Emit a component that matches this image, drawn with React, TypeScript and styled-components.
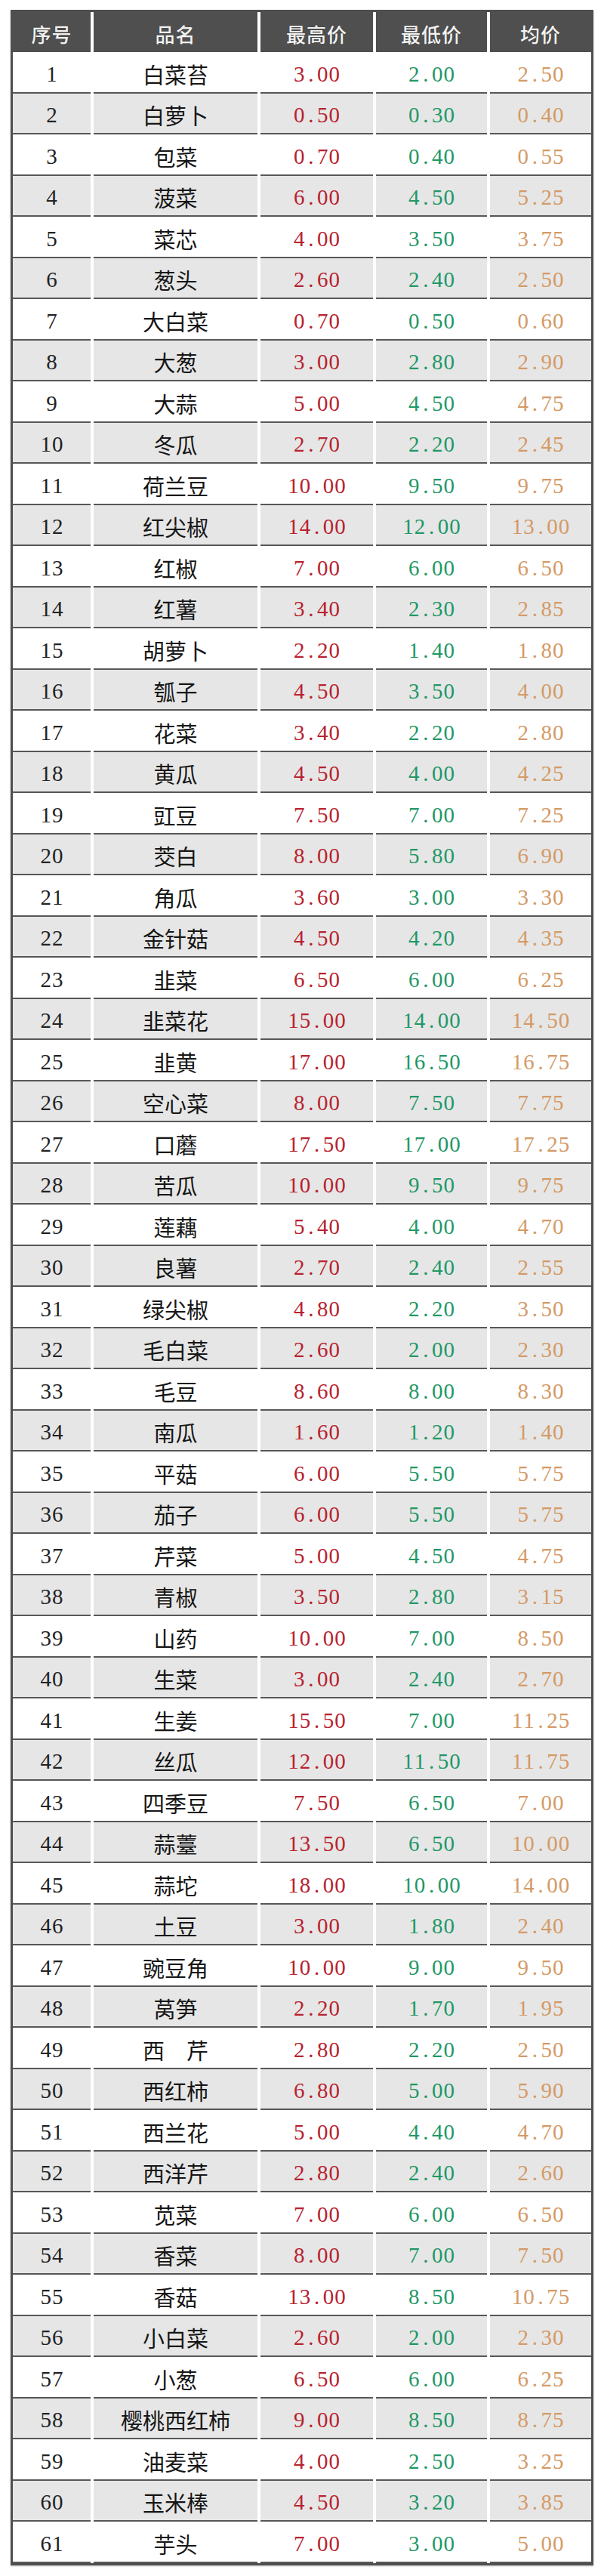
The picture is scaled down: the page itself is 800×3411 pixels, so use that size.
import React from "react";
import styled, { createGlobalStyle } from "styled-components";

const GlobalStyle = createGlobalStyle`
  html, body {
    margin: 0;
    padding: 0;
    background: #ffffff;
  }
  body {
    font-family: "Liberation Serif", "Noto Sans CJK SC", serif;
  }
`;

type Item = [string, string, string, string];

const DATA: Item[] = [
  ["白菜苔", "3.00", "2.00", "2.50"],
  ["白萝卜", "0.50", "0.30", "0.40"],
  ["包菜", "0.70", "0.40", "0.55"],
  ["菠菜", "6.00", "4.50", "5.25"],
  ["菜芯", "4.00", "3.50", "3.75"],
  ["葱头", "2.60", "2.40", "2.50"],
  ["大白菜", "0.70", "0.50", "0.60"],
  ["大葱", "3.00", "2.80", "2.90"],
  ["大蒜", "5.00", "4.50", "4.75"],
  ["冬瓜", "2.70", "2.20", "2.45"],
  ["荷兰豆", "10.00", "9.50", "9.75"],
  ["红尖椒", "14.00", "12.00", "13.00"],
  ["红椒", "7.00", "6.00", "6.50"],
  ["红薯", "3.40", "2.30", "2.85"],
  ["胡萝卜", "2.20", "1.40", "1.80"],
  ["瓠子", "4.50", "3.50", "4.00"],
  ["花菜", "3.40", "2.20", "2.80"],
  ["黄瓜", "4.50", "4.00", "4.25"],
  ["豇豆", "7.50", "7.00", "7.25"],
  ["茭白", "8.00", "5.80", "6.90"],
  ["角瓜", "3.60", "3.00", "3.30"],
  ["金针菇", "4.50", "4.20", "4.35"],
  ["韭菜", "6.50", "6.00", "6.25"],
  ["韭菜花", "15.00", "14.00", "14.50"],
  ["韭黄", "17.00", "16.50", "16.75"],
  ["空心菜", "8.00", "7.50", "7.75"],
  ["口蘑", "17.50", "17.00", "17.25"],
  ["苦瓜", "10.00", "9.50", "9.75"],
  ["莲藕", "5.40", "4.00", "4.70"],
  ["良薯", "2.70", "2.40", "2.55"],
  ["绿尖椒", "4.80", "2.20", "3.50"],
  ["毛白菜", "2.60", "2.00", "2.30"],
  ["毛豆", "8.60", "8.00", "8.30"],
  ["南瓜", "1.60", "1.20", "1.40"],
  ["平菇", "6.00", "5.50", "5.75"],
  ["茄子", "6.00", "5.50", "5.75"],
  ["芹菜", "5.00", "4.50", "4.75"],
  ["青椒", "3.50", "2.80", "3.15"],
  ["山药", "10.00", "7.00", "8.50"],
  ["生菜", "3.00", "2.40", "2.70"],
  ["生姜", "15.50", "7.00", "11.25"],
  ["丝瓜", "12.00", "11.50", "11.75"],
  ["四季豆", "7.50", "6.50", "7.00"],
  ["蒜薹", "13.50", "6.50", "10.00"],
  ["蒜坨", "18.00", "10.00", "14.00"],
  ["土豆", "3.00", "1.80", "2.40"],
  ["豌豆角", "10.00", "9.00", "9.50"],
  ["莴笋", "2.20", "1.70", "1.95"],
  ["西\u3000芹", "2.80", "2.20", "2.50"],
  ["西红柿", "6.80", "5.00", "5.90"],
  ["西兰花", "5.00", "4.40", "4.70"],
  ["西洋芹", "2.80", "2.40", "2.60"],
  ["苋菜", "7.00", "6.00", "6.50"],
  ["香菜", "8.00", "7.00", "7.50"],
  ["香菇", "13.00", "8.50", "10.75"],
  ["小白菜", "2.60", "2.00", "2.30"],
  ["小葱", "6.50", "6.00", "6.25"],
  ["樱桃西红柿", "9.00", "8.50", "8.75"],
  ["油麦菜", "4.00", "2.50", "3.25"],
  ["玉米棒", "4.50", "3.20", "3.85"],
  ["芋头", "7.00", "3.00", "5.00"],
];

const COLS = "103px 217px 149px 147px 1fr";

const Table = styled.div`
  margin: 13px 14px 15px 14px;
  border: 3px solid #4f4f4f;
  background: #ffffff;
  box-shadow: 0 1px 2px rgba(0, 0, 0, 0.25);
`;

const HeaderRow = styled.div`
  display: grid;
  grid-template-columns: ${COLS};
  column-gap: 4px;
  height: 53px;
  background: #ffffff;
`;

const HeaderCell = styled.div`
  display: flex;
  align-items: center;
  justify-content: center;
  padding-top: 3px;
  box-sizing: border-box;
  background: #4f4f4f;
  color: #f2f2f2;
  font-family: "Noto Sans CJK SC", sans-serif;
  font-weight: 500;
  font-size: 26px;
  letter-spacing: 1px;
  text-shadow: 0 0 1px rgba(0, 0, 0, 0.4);
`;

const Row = styled.div`
  display: grid;
  grid-template-columns: ${COLS};
  column-gap: 4px;
  height: 54.5px;
  background: #ffffff;
`;

const Cell = styled.div<{ $shade: boolean }>`
  display: flex;
  align-items: center;
  justify-content: center;
  padding-top: 6px;
  box-sizing: border-box;
  background: ${(p) => (p.$shade ? "#e6e6e6" : "#ffffff")};
  border-bottom: 2px solid #575757;
`;

const Name = styled.span`
  font-family: "Noto Sans CJK SC", sans-serif;
  font-size: 29px;
  font-weight: 400;
  color: #161616;
  line-height: 1;
`;

const Num = styled.span<{ $color: string }>`
  display: inline-flex;
  font-family: "Liberation Serif", "DejaVu Serif", serif;
  font-size: 29px;
  line-height: 1;
  color: ${(p) => p.$color};
`;

const Glyph = styled.span`
  display: inline-block;
  width: 15.5px;
  text-align: center;
`;

const MonoNumber: React.FC<{ value: string; color: string }> = ({ value, color }) => (
  <Num $color={color}>
    {value.split("").map((ch, i) => (
      <Glyph key={i}>{ch}</Glyph>
    ))}
  </Num>
);

const HEADERS = ["序号", "品名", "最高价", "最低价", "均价"];

export default function App() {
  return (
    <>
      <GlobalStyle />
      <Table>
        <HeaderRow>
          {HEADERS.map((h) => (
            <HeaderCell key={h}>{h}</HeaderCell>
          ))}
        </HeaderRow>
        {DATA.map(([name, hi, lo, avg], i) => {
          const shade = i % 2 === 1;
          return (
            <Row key={i}>
              <Cell $shade={shade}>
                <MonoNumber value={String(i + 1)} color="#222222" />
              </Cell>
              <Cell $shade={shade}>
                <Name>{name}</Name>
              </Cell>
              <Cell $shade={shade}>
                <MonoNumber value={hi} color="#b8222e" />
              </Cell>
              <Cell $shade={shade}>
                <MonoNumber value={lo} color="#1f9866" />
              </Cell>
              <Cell $shade={shade}>
                <MonoNumber value={avg} color="#d49a66" />
              </Cell>
            </Row>
          );
        })}
      </Table>
    </>
  );
}
